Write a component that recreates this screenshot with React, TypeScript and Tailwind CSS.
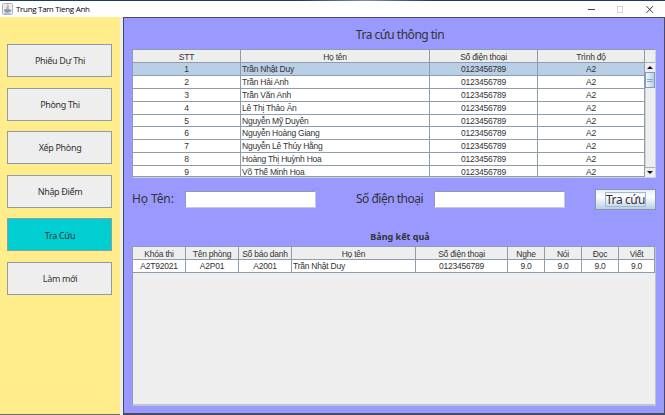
const students = [
  "Trần Nhật Duy",
  "Trần Hải Anh",
  "Trần Văn Anh",
  "Lê Thị Thảo Ân",
  "Nguyễn Mỹ Duyên",
  "Nguyễn Hoàng Giang",
  "Nguyễn Lê Thúy Hằng",
  "Hoàng Thị Huỳnh Hoa",
  "Võ Thế Minh Hoa",
];

const menu = ["Phiếu Dự Thi", "Phòng Thi", "Xếp Phòng", "Nhập Điểm", "Tra Cứu", "Làm mới"];

const ui = "font-['Noto_Sans','DejaVu_Sans',sans-serif]";
const tableText = "font-['Liberation_Sans',sans-serif] text-[8.5px] leading-[12px] tracking-[-0.23px] text-[#333]";

function JavaIcon() {
  return (
    <svg width="11" height="12" viewBox="0 0 11 12">
      <rect x="0.5" y="0.5" width="10" height="11" rx="1" fill="#e9eef3" stroke="#a9b4c0" />
      <path d="M5.8 1.5C6.6 3 3.8 3.8 5.2 6M7 3.3C5.5 4 5.8 4.8 6.2 5.8" stroke="#e58a3c" strokeWidth="1" fill="none" />
      <path d="M2.6 6.6h4.9v1.2c0 1-.9 1.4-2.4 1.4s-2.4-.5-2.4-1.4zM7.5 7h1.2v1.2H7.3M2 10.2h6.6" fill="#7f9dbd" stroke="#6a88ab" strokeWidth="0.6" />
    </svg>
  );
}

function TitleBar() {
  return (
    <header className="flex h-4 shrink-0 items-center bg-white pl-[2px] pr-[11px]">
      <JavaIcon />
      <span className="ml-[3px] font-['Open_Sans',sans-serif] text-[8px] leading-4 tracking-[-0.3px] text-black">
        Trung Tam Tieng Anh
      </span>
      <svg className="ml-auto" width="67" height="9" viewBox="0 0 67 9" fill="none">
        <path d="M1 4.5h7" stroke="#444" />
        <rect x="30.5" y="1.5" width="5" height="6" stroke="#d4d4d4" />
        <path d="M59.5 1.2l6.5 6.6M66 1.2l-6.5 6.6" stroke="#333" />
      </svg>
    </header>
  );
}

function Sidebar() {
  return (
    <nav className="flex w-[120px] shrink-0 flex-col gap-[10.6px] border-b border-[#6b6b60] bg-[#ffec8b] pl-[7px] pt-[27px]">
      {menu.map((label) => (
        <button
          key={label}
          className={`h-[33px] w-[105px] shrink-0 border border-[#8f9ba6] pl-px pt-px text-[9px] tracking-[-0.35px] text-[#333] ${ui} ${
            label === "Tra Cứu" ? "bg-[#00ced1]" : "bg-[#eee]"
          }`}
        >
          {label}
        </button>
      ))}
    </nav>
  );
}

const head = "border-b border-r border-[#8d9dac] bg-[#eee] pt-px text-center";
const cell = "border-b border-r border-[#8d9dac]";

function ScrollBar() {
  return (
    <div className="flex w-[10px] flex-col">
      <div className="h-[13px] shrink-0 border-b border-[#a5b1bd] bg-[#eee]" />
      <div className="flex h-[9px] shrink-0 items-center justify-center bg-[#eee]">
        <svg width="6" height="3" viewBox="0 0 6 3"><path d="M0 3L3 0l3 3z" fill="#111" /></svg>
      </div>
      <div className="flex h-4 shrink-0 flex-col items-center justify-center gap-px border border-[#7f9acb] bg-linear-to-r from-[#f2f7fc] to-[#b8cfe5]">
        <div className="h-px w-[6px] bg-[#8ba8cf]" />
        <div className="h-px w-[6px] bg-[#8ba8cf]" />
      </div>
      <div className="grow border-l border-[#cbd3da] bg-[#eee]" />
      <div className="flex h-[10px] shrink-0 items-center justify-center border-t border-[#a5b1bd] bg-[#eee]">
        <svg width="6" height="3" viewBox="0 0 6 3"><path d="M0 0l3 3 3-3z" fill="#111" /></svg>
      </div>
    </div>
  );
}

function StudentTable() {
  return (
    <div className={`ml-[8px] flex h-[129px] w-[524px] shrink-0 border border-[#8d9dac] border-b-[#c8d0d8] border-r-[#c8d0d8] ${tableText}`}>
      <div className="grid w-[512px] grid-cols-[108px_189px_108px_107px] grid-rows-[13px_13px_13px_13px_13px_12px_13px_13px_13px_11px] overflow-hidden bg-white">
        <div className={head}>STT</div>
        <div className={head}>Họ tên</div>
        <div className={head}>Số điện thoại</div>
        <div className={head}>Trình độ</div>
        {students.map((name, i) => {
          const tone = i === 0 ? "bg-[#b8cfe5]" : "bg-white";
          return (
            <div key={name} className="contents">
              <div className={`${cell} ${tone} text-center`}>{i + 1}</div>
              <div className={`${cell} ${tone} whitespace-nowrap pl-px`}>{name}</div>
              <div className={`${cell} ${tone} text-center`}>0123456789</div>
              <div className={`${cell} ${tone} text-center`}>A2</div>
            </div>
          );
        })}
      </div>
      <ScrollBar />
    </div>
  );
}

const results = [
  ["Khóa thi", "A2T92021"],
  ["Tên phòng", "A2P01"],
  ["Số báo danh", "A2001"],
  ["Họ tên", "Trần Nhật Duy"],
  ["Số điện thoại", "0123456789"],
  ["Nghe", "9.0"],
  ["Nói", "9.0"],
  ["Đọc", "9.0"],
  ["Viết", "9.0"],
];

function ResultTable() {
  return (
    <div className={`ml-[8px] h-[160px] w-[524px] shrink-0 border border-[#8d9dac] border-b-2 border-b-[#bcc4cc] border-r-[#bcc4cc] bg-[#eee] ${tableText}`}>
      <div className="grid grid-cols-[53px_53px_53px_124px_92px_37px_37px_37px_36px] grid-rows-[13px_13px] whitespace-nowrap">
        {results.map(([title]) => (
          <div key={title} className={head}>{title}</div>
        ))}
        {results.map(([title, value]) => (
          <div key={title} className={`${cell} bg-white ${title === "Họ tên" ? "pl-px" : "text-center"}`}>{value}</div>
        ))}
      </div>
    </div>
  );
}

function SearchForm() {
  const field = "h-[17px] w-[131px] shrink-0 border border-[#8d9dac] border-b-[#c3cbd3] border-r-[#c3cbd3] bg-white outline-none";
  return (
    <form className={`mt-[11px] flex h-5 shrink-0 items-center pl-[8px] text-[12px] text-[#333] ${ui}`}>
      <label className="w-[53px] shrink-0 whitespace-nowrap tracking-[-0.1px]">Họ Tên:</label>
      <input className={field} />
      <label className="ml-[40px] w-[78px] shrink-0 whitespace-nowrap tracking-[-0.5px]">Số điện thoại</label>
      <input className={field} />
      <button
        type="button"
        className="ml-[30px] flex h-[21px] w-[61px] shrink-0 items-center justify-center border border-[#8797ab] bg-linear-to-b from-[#e4edf6] via-white via-35% to-[#b8cfe5] tracking-[-0.4px]"
      >
        <span className="h-[15px] border border-[#a3b8cc] leading-[13px]">Tra cứu</span>
      </button>
    </form>
  );
}

export default function App() {
  return (
    <div className="flex h-[415px] w-[665px] flex-col overflow-hidden bg-[#eee]">
      <div className="h-px shrink-0 bg-linear-to-r from-[#1e3868] from-45% via-[#8290a8] via-55% to-[#1e3868] to-65%" />
      <TitleBar />
      <div className="flex grow">
        <Sidebar />
        <main className="ml-[3px] flex w-[542px] flex-col border border-b-2 border-[#484860] bg-[#9999ff]">
          <h1 className={`mt-[9px] mb-[7px] h-[15px] shrink-0 pl-[12px] text-center text-[12px] leading-[16px] tracking-[-0.5px] text-[#333] ${ui}`}>
            Tra cứu thông tin
          </h1>
          <StudentTable />
          <SearchForm />
          <h2 className={`mt-[22px] mb-[3px] h-[12px] shrink-0 pl-[12px] text-center text-[9px] font-bold leading-[12px] text-[#333] ${ui}`}>
            Bảng kết quả
          </h2>
          <ResultTable />
        </main>
      </div>
    </div>
  );
}
